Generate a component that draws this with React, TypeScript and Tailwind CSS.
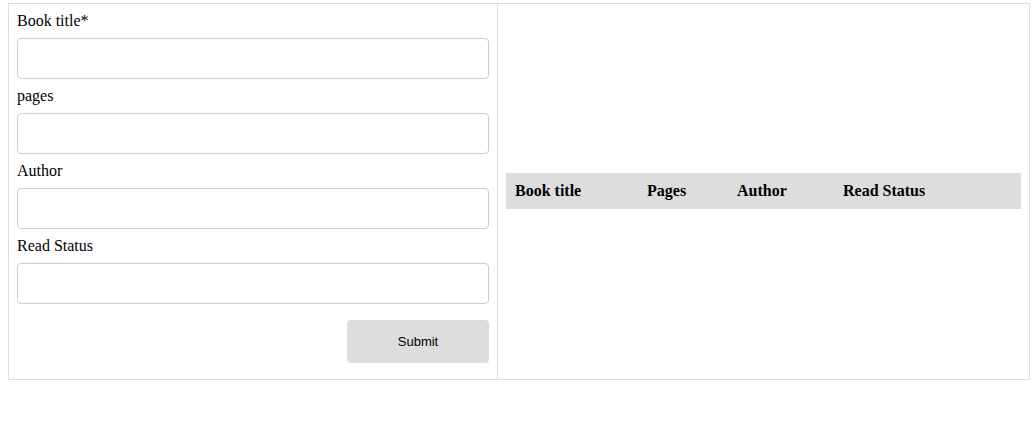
import React from "react";

const fields = ["Book title*", "pages", "Author", "Read Status"];

export default function App() {
  return (
    <div className="min-h-[425px] bg-white pt-[3px] pl-2 font-['Liberation_Serif',serif] text-black">
      <div className="flex h-[377px] w-[1022px] border border-[#dddddd]">
        {/* form */}
        <div className="flex w-[489px] flex-col border-r border-[#dddddd] px-2 pt-2 pb-[15px]">
          {fields.map((f) => (
            <div key={f} className="flex flex-col">
              <label className="text-base leading-[18px]">{f}</label>
              <input className="mt-2 mb-2 h-[41px] w-[472px] rounded border border-[#cccccc] bg-white px-2 outline-none" />
            </div>
          ))}
          <div className="mt-2 flex justify-end">
            <button className="h-[43px] w-[142px] rounded bg-[#dddddd] font-['Liberation_Sans',sans-serif] text-[13px] text-black">
              Submit
            </button>
          </div>
        </div>
        {/* table */}
        <div className="flex flex-1 items-center px-2">
          <div className="mb-[2px] grid h-9 w-full grid-cols-[141px_90px_106px_1fr] items-center bg-[#dddddd] text-base font-bold">
            <span className="pl-[9px]">Book title</span>
            <span>Pages</span>
            <span>Author</span>
            <span>Read Status</span>
          </div>
        </div>
      </div>
    </div>
  );
}
